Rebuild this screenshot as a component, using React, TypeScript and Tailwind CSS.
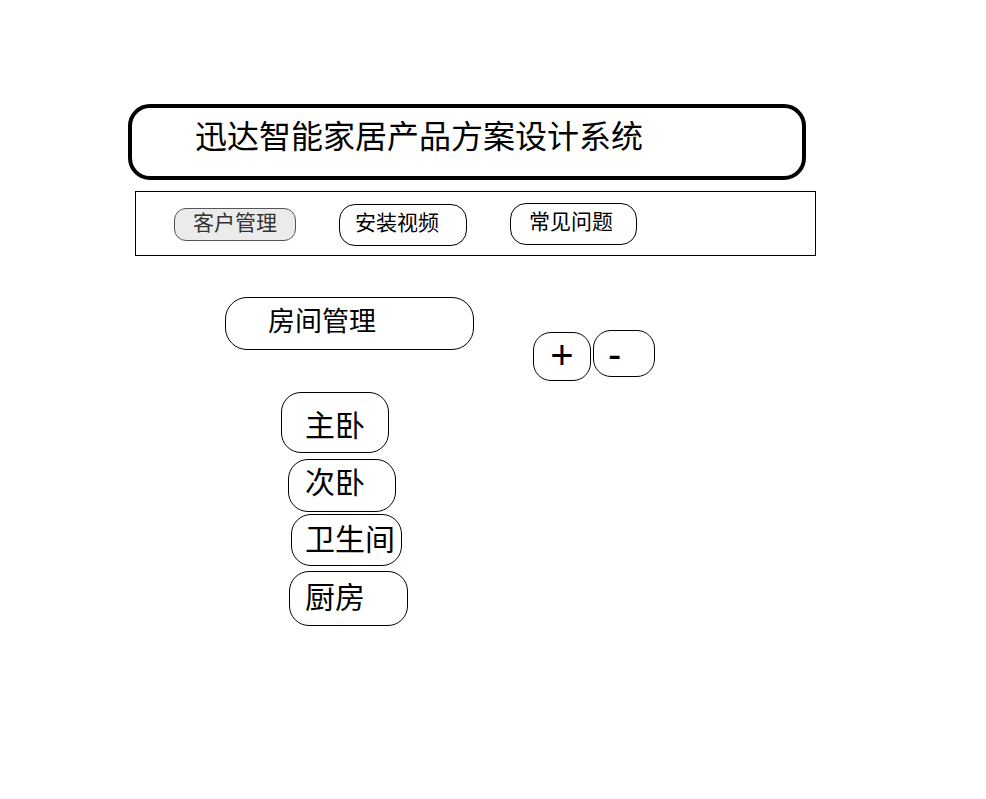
const cjk = { fontFamily: '"Noto Sans CJK SC", "Noto Sans", sans-serif' };
const latin = { fontFamily: '"Liberation Sans", sans-serif' };

function RoomButton({ label, className }: { label: string; className: string }) {
  return (
    <div className={`flex items-center border border-black rounded-[20px] text-[30px] leading-none text-black ${className}`}>
      {label}
    </div>
  );
}

export default function App() {
  return (
    <div className="w-[986px] h-[799px] bg-white pt-[104px] pl-[128px]" style={cjk}>
      {/* header */}
      <div className="w-[678px] h-[76px] border-[4px] border-black rounded-[22px] flex items-center pl-[63px] pb-[16px]">
        <span className="text-[32px] leading-none text-black">迅达智能家居产品方案设计系统</span>
      </div>

      {/* nav */}
      <div className="mt-[11px] ml-[7px] w-[681px] h-[65px] border border-black flex items-center pl-[38px]">
        <button className="w-[122px] h-[33px] mt-[1px] pb-[6px] rounded-[12px] border border-[#555] bg-[#ebebeb] text-[#333] text-[21px] leading-none flex items-center justify-center">
          客户管理
        </button>
        <button className="ml-[43px] w-[128px] h-[42px] mt-[3px] pb-[8px] rounded-[16px] border border-black bg-white text-black text-[21px] leading-none flex items-center pl-[15px]">
          安装视频
        </button>
        <button className="ml-[43px] w-[127px] h-[42px] mt-[1px] pb-[7px] rounded-[16px] border border-black bg-white text-black text-[21px] leading-none flex items-center pl-[18px]">
          常见问题
        </button>
      </div>

      {/* room management row */}
      <div className="mt-[41px] ml-[97px] flex items-start">
        <div className="w-[249px] h-[53px] border border-black rounded-[22px] flex items-center pl-[42px] pb-[8px] text-[27px] leading-none text-black">
          房间管理
        </div>
        <button className="ml-[59px] mt-[35px] w-[58px] h-[49px] pb-[3px] border border-black rounded-[18px] flex items-center justify-center text-[40px] leading-none text-black" style={latin}>
          +
        </button>
        <button className="ml-[2px] mt-[33px] w-[62px] h-[47px] border border-black rounded-[18px] flex items-center pl-[14px] text-[40px] leading-none text-black" style={latin}>
          -
        </button>
      </div>

      {/* room list */}
      <div className="flex flex-col items-start mt-[11px]">
        <RoomButton label="主卧" className="ml-[153px] w-[108px] h-[61px] pl-[23px]" />
        <RoomButton label="次卧" className="ml-[160px] mt-[6px] w-[108px] h-[53px] pl-[16px] pb-[12px]" />
        <RoomButton label="卫生间" className="ml-[163px] mt-[2px] w-[111px] h-[52px] pl-[13px] pb-[6px]" />
        <RoomButton label="厨房" className="ml-[161px] mt-[5px] w-[119px] h-[55px] pl-[15px] pb-[8px]" />
      </div>
    </div>
  );
}
